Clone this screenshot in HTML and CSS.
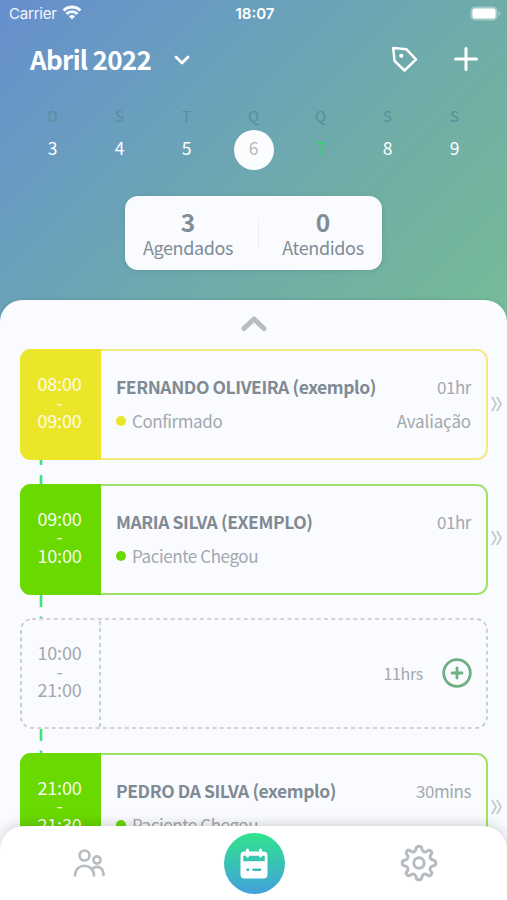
FILE: index.html
```html
<!DOCTYPE html>
<html lang="pt-BR">
<head>
<meta charset="utf-8">
<title>Agenda</title>
<link rel="stylesheet" href="styles.css">
</head>
<body>
<div class="app">
  <header class="hero">
    <div class="status">
      <div class="carrier"><span>Carrier</span>
        <svg width="20" height="15" viewBox="0 0 20 15" fill="none" stroke="#fff" stroke-width="2.8"><path d="M1.5 5.400a12.300 12.300 0 0 1 17 0M4.500 8.900a7.800 7.800 0 0 1 11 0"/><path d="M10 14.500l-3.200-3.200a4.500 4.500 0 0 1 6.400 0z" fill="#fff" stroke="none"/></svg>
      </div>
      <div class="clock">18:07</div>
      <svg class="battery" width="31" height="15" viewBox="0 0 31 15"><rect x=".5" y=".5" width="27" height="14" rx="4.5" fill="#fff" opacity=".35"/><rect x="2.5" y="2.5" width="23" height="10" rx="2.5" fill="#fff"/><path d="M28.6 5v5q1.6-1 1.6-2.500T28.600 5" fill="#fff" opacity=".45"/></svg>
    </div>
    <div class="titlebar">
      <h1>Abril 2022</h1>
      <svg class="down" width="18" height="12" viewBox="0 0 18 12" fill="none" stroke="#fff" stroke-width="2.800" stroke-linecap="round" stroke-linejoin="round"><path d="M3 3l6 6 6-6"/></svg>
      <svg class="tag" width="28" height="28" viewBox="0 0 28 28" fill="none" stroke="#fff" stroke-width="2.500" stroke-linejoin="round"><path d="M3.200 3l13.300 1.300 9.500 10-11.500 11.200L4.500 15.800z"/><circle cx="11.300" cy="10.800" r="2.100" fill="#fff" stroke="none"/></svg>
      <svg class="add" width="26" height="26" viewBox="0 0 26 26" stroke="#fff" stroke-width="3" stroke-linecap="round"><path d="M13 2.500v21M2.500 13h21"/></svg>
    </div>
    <div class="week">
      <div class="day"><span>D</span><b>3</b></div>
      <div class="day"><span>S</span><b>4</b></div>
      <div class="day"><span>T</span><b>5</b></div>
      <div class="day"><span>Q</span><b class="selected">6</b></div>
      <div class="day"><span>Q</span><b class="today">7</b></div>
      <div class="day"><span>S</span><b>8</b></div>
      <div class="day"><span>S</span><b>9</b></div>
    </div>
    <div class="summary">
      <div class="stat"><strong>3</strong><span>Agendados</span></div>
      <div class="stat"><strong>0</strong><span>Atendidos</span></div>
    </div>
  </header>
  <main class="sheet">
    <svg class="handle" width="28" height="18" viewBox="0 0 28 18" fill="none" stroke="#b8bdc2" stroke-width="5" stroke-linecap="round" stroke-linejoin="round"><path d="M4 13.500L14 4l10 9.500"/></svg>
    <div class="row">
      <article class="card yellow">
        <div class="time"><span>08:00</span><span>-</span><span>09:00</span></div>
        <div class="info">
          <div class="line"><h2>FERNANDO OLIVEIRA (exemplo)</h2><span>01hr</span></div>
          <div class="line"><p><i></i>Confirmado</p><span class="kind">Avaliação</span></div>
        </div>
      </article>
      <svg class="more" width="13" height="16" viewBox="0 0 13 16"><path d="M2 1l4 7-4 7M7 1l4 7-4 7"/></svg>
    </div>
    <div class="gap"><svg width="4" height="24" viewBox="0 0 4 24"><path d="M2 0v5M2 15v9"/></svg></div>
    <div class="row">
      <article class="card green">
        <div class="time"><span>09:00</span><span>-</span><span>10:00</span></div>
        <div class="info">
          <div class="line"><h2>MARIA SILVA (EXEMPLO)</h2><span>01hr</span></div>
          <div class="line"><p><i></i>Paciente Chegou</p></div>
        </div>
      </article>
      <svg class="more" width="13" height="16" viewBox="0 0 13 16"><path d="M2 1l4 7-4 7M7 1l4 7-4 7"/></svg>
    </div>
    <div class="gap"><svg width="4" height="24" viewBox="0 0 4 24"><path d="M2 0v12M2 21.500v2.500"/></svg></div>
    <div class="row">
      <article class="card free">
        <svg class="outline" width="468" height="111" viewBox="0 0 468 111"><rect x="1" y="1" width="466" height="109" rx="11"/><path d="M80 3v106"/></svg>
        <div class="time"><span>10:00</span><span>-</span><span>21:00</span></div>
        <div class="slot"><span>11hrs</span>
          <svg width="30" height="30" viewBox="0 0 30 30" fill="none" stroke="#6faf82" stroke-width="2.800" stroke-linecap="round"><circle cx="15" cy="15" r="13.300"/><path d="M15 10v10M10 15h10"/></svg>
        </div>
      </article>
    </div>
    <div class="gap"><svg width="4" height="24" viewBox="0 0 4 24"><path d="M2 0v12M2 21.500v2.500"/></svg></div>
    <div class="row">
      <article class="card green">
        <div class="time"><span>21:00</span><span>-</span><span>21:30</span></div>
        <div class="info">
          <div class="line"><h2>PEDRO DA SILVA (exemplo)</h2><span>30mins</span></div>
          <div class="line"><p><i></i>Paciente Chegou</p></div>
        </div>
      </article>
      <svg class="more" width="13" height="16" viewBox="0 0 13 16"><path d="M2 1l4 7-4 7M7 1l4 7-4 7"/></svg>
    </div>
  </main>
  <nav class="tabs">
    <svg class="people" width="32" height="28" viewBox="0 0 32 28" fill="none" stroke="#b7bcc1" stroke-width="2.600" stroke-linecap="round"><circle cx="11.500" cy="6.500" r="5"/><circle cx="24" cy="11" r="3.600"/><path d="M2 26.500c0-13 19-13 19 0M20.500 19c5-3 10 .5 10 7"/></svg>
    <div class="active"><svg width="28" height="31" viewBox="0 0 28 31"><path fill="#fff" fill-rule="evenodd" d="M4.500 3.500h19a4 4 0 0 1 4 4v19a4 4 0 0 1-4 4h-19a4 4 0 0 1-4-4v-19a4 4 0 0 1 4-4zM3.200 7.800v5.400h21.600V7.800zM6.500 20.500v2.500h2.500v-2.500zM12.500 20.500v2.500h8.500v-2.500z"/><path d="M7.500 2v6M20.500 2v6" stroke="#fff" stroke-width="3" stroke-linecap="round"/></svg></div>
    <svg width="38" height="38" viewBox="-19 -19 38 38" fill="none" stroke="#b7bcc1" stroke-width="3" stroke-linejoin="round"><circle r="5.200"/><path d="M-2.800-14.500Q-2.500-16.800 0-16.800T2.800-14.500Q3.200-12 5-11.200T8.500-12Q10.300-13.500 12-12T12-8.500Q10.500-6.500 11.200-5T14.500-2.800Q16.800-2.500 16.800 0T14.500 2.800Q12 3.200 11.200 5T12 8.500Q13.500 10.300 12 12T8.500 12Q6.500 10.500 5 11.200T2.800 14.500Q2.500 16.800 0 16.800T-2.800 14.500Q-3.200 12-5 11.200T-8.500 12Q-10.300 13.500-12 12T-12 8.500Q-10.500 6.500-11.200 5T-14.500 2.800Q-16.800 2.500-16.800 0T-14.500-2.800Q-12-3.200-11.200-5T-12-8.500Q-13.500-10.300-12-12T-8.500-12Q-6.500-10.500-5-11.200T-2.800-14.500Z"/></svg>
  </nav>
</div>
</body>
</html>
```
FILE: styles.css
```css
* { box-sizing: border-box; }
body { margin: 0; font-family: "Noto Sans CJK SC", sans-serif; color: #a2a8ae; }
h1, h2, p { margin: 0; }
svg { display: block; flex: none; }
.app { position: relative; width: 507px; height: 900px; overflow: hidden; background: linear-gradient(135deg, #668fce 0, #6aa0bc 33%, #6faca9 60%, #74b59d 84%, #77bc98 100%) 0 0 / 507px 330px no-repeat; }
.hero { height: 300px; }
.status { height: 28px; padding: 0 6px 0 9px; display: grid; grid-template-columns: 1fr auto 1fr; align-items: center; color: #fff; font: 15px/28px Inter, sans-serif; }
.carrier { display: flex; gap: 6px; opacity: .93; }
.carrier span { width: 47px; letter-spacing: -.2px; }
.carrier svg { margin-top: 5px; }
.clock { font-weight: 600; }
.battery { justify-self: end; margin-top: -1px; }
.titlebar { height: 62px; padding: 0 28px 0 30px; display: flex; align-items: center; color: #fff; }
h1 { width: 121px; font-size: 26px; line-height: 58px; letter-spacing: -.7px; white-space: nowrap; }
.down { margin-left: 22px; margin-top: 2px; }
.tag { margin-left: auto; }
.add { margin-left: 35px; }
.week { height: 81px; padding: 14px 19px 0; display: grid; grid-template-columns: repeat(7, 1fr); text-align: center; }
.day { display: flex; flex-direction: column; align-items: center; }
.day span { height: 26px; font-size: 15px; line-height: 24px; color: #5b8c9c; }
.day b { width: 40px; height: 40px; line-height: 35px; border-radius: 50%; font-size: 17.500px; font-weight: 400; color: #fff; }
.day .selected { background: #fafcfe; color: #b5b8bc; }
.day .today { color: #36d371; }
.summary { width: 257px; height: 74px; margin: 25px 0 0 125px; display: flex; border-radius: 13px; background: #fafbfe; box-shadow: 0 1px 5px #3c707944; color: #808c96; }
.stat { position: relative; width: 126px; display: flex; flex-direction: column; align-items: center; }
.stat + .stat { width: 131px; padding-left: 13px; }
.stat + .stat::before { content: ""; position: absolute; left: 7px; top: 24px; width: 1px; height: 28px; background: #eceef1; }
.stat strong { font-size: 24.500px; line-height: 28px; padding-top: 12px; height: 39px; }
.stat span { font-size: 18px; line-height: 24px; letter-spacing: -.37px; white-space: nowrap; }
.sheet { height: 600px; padding: 15px 3px 0 20px; border-radius: 22px 22px 0 0; background: #fafbfe; box-shadow: 0 -1px 3px #45798044; }
.handle { margin: 0 0 16px 220px; }
.row { display: flex; align-items: center; gap: 2px; }
.card { position: relative; width: 468px; height: 111px; display: flex; border: 2px solid var(--line); border-radius: 11px; }
.yellow { --line: #f2e97f; --fill: #ece62b; }
.green { --line: #9fe269; --fill: #69d900; }
.free { --line: transparent; --fill: transparent; }
.outline { position: absolute; left: -2px; top: -2px; fill: none; stroke: #c5c8ca; stroke-width: 1.700; stroke-dasharray: 4 3.300; }
.time { width: 81px; flex: none; margin: -2px 0 -2px -2px; padding: 25px 2px 0 0; display: flex; flex-direction: column; align-items: center; border-radius: 11px 0 0 11px; background: var(--fill); color: #fafbe9; font-size: 18px; letter-spacing: -.2px; }
.time span { height: 18.500px; line-height: 18.500px; }
.free .time { color: #a2a8ae; }
.info { flex: 1; padding: 19px 15px 0; }
.line { height: 34px; display: flex; justify-content: space-between; align-items: center; font-size: 17px; line-height: 34px; letter-spacing: -.42px; white-space: nowrap; }
.kind { letter-spacing: -.15px; }
h2 { font-size: 17.500px; color: #808a94; }
p { display: flex; align-items: center; }
i { width: 10px; height: 10px; margin-right: 6px; border-radius: 50%; background: var(--fill); }
.more { margin-top: -2px; fill: none; stroke: #c4c8cf; stroke-width: 1.800; }
.gap { height: 23.500px; padding-left: 19px; overflow: hidden; }
.gap svg { stroke: #43df7a; stroke-width: 2.600; }
.slot { flex: 1; padding: 0 14px 2px 0; display: flex; align-items: center; justify-content: flex-end; gap: 19px; font-size: 16px; letter-spacing: -.3px; }
.tabs { position: absolute; inset: 826px 0 0; padding: 0 69px 0 73px; display: flex; justify-content: space-between; align-items: center; border-radius: 24px 24px 0 0; background: #fff; box-shadow: 0 -2px 12px #0000002a; }
.people { margin-right: 3px; }
.active { width: 61px; height: 61px; display: grid; place-items: center; border-radius: 50%; background: linear-gradient(#30e38c, #42a1dc); }
```
